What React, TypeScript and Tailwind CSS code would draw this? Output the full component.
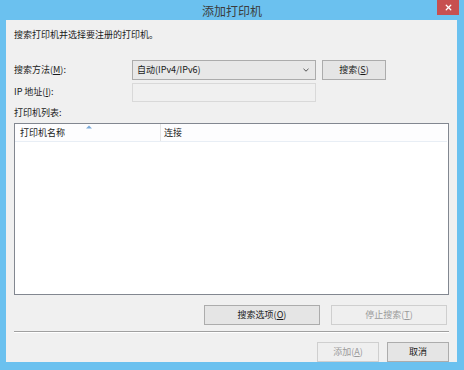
import { X } from 'lucide-react';

const font = "font-['Microsoft_YaHei','Noto_Sans_CJK_SC',sans-serif]";

function Key({ k }: { k: string }) {
  return <span className="underline underline-offset-1">{k}</span>;
}

function Button({ children, disabled, className = '' }: { children: React.ReactNode; disabled?: boolean; className?: string }) {
  return (
    <div
      className={`h-[20px] flex items-center justify-center border text-[9px] ${
        disabled ? 'border-[#cfcfcf] bg-[#efefef] text-[#9a9a9a]' : 'border-[#acacac] bg-[#e5e5e5] text-[#1a1a1a]'
      } ${className}`}
    >
      {children}
    </div>
  );
}

export default function App() {
  return (
    <div className={`relative w-[464px] h-[370px] bg-[#6bc1ef] flex flex-col ${font}`}>
      {/* title bar */}
      <div className="h-[22px] flex items-center justify-center text-[12px] text-[#3c3c3c] pt-[2px]">添加打印机</div>
      <div className="absolute top-0 right-[5px] w-[22px] h-[15px] bg-[#c75050] flex items-center justify-center">
        <X size={9} strokeWidth={3.5} color="#fff" />
      </div>

      {/* client */}
      <div className="ml-[6px] mr-[7px] mb-[8px] flex-1 bg-[#f0f0f0] px-[8px] pt-[8px] flex flex-col text-[9px] text-[#1a1a1a]">
        <div className="h-[14px] leading-[14px]">搜索打印机并选择要注册的打印机。</div>

        <div className="mt-[18px] flex items-center h-[20px]">
          <div className="w-[118px]">
            搜索方法(<Key k="M" />):
          </div>
          <div className="w-[184px] h-[20px] border border-[#acacac] bg-[#e8e8e8] flex items-center justify-between pl-[4px] pr-[6px]">
            <span>自动(IPv4/IPv6)</span>
            <svg width="6" height="4" viewBox="0 0 6 4">
              <path d="M0.5 0.8 L3 3.2 L5.5 0.8" fill="none" stroke="#555" strokeWidth="1" />
            </svg>
          </div>
          <Button className="ml-[6px] w-[64px]">
            搜索(<Key k="S" />)
          </Button>
        </div>

        <div className="mt-[2px] flex items-center h-[20px]">
          <div className="w-[118px]">
            IP 地址(<Key k="I" />):
          </div>
          <div className="w-[184px] h-[19px] border border-[#d9d9d9] bg-[#f0f0f0]" />
        </div>

        <div className="mt-[3px] h-[15px] leading-[15px]">打印机列表:</div>

        <div className="mt-[3px] h-[172px] border border-[#828790] bg-white flex flex-col">
          <div className="h-[18px] flex border-b border-[#e8eef5] bg-[#fdfdfe] mr-[1px]">
            <div className="relative w-[146px] border-r border-[#e5e5e5] flex items-center pl-[5px]">
              打印机名称
              <svg className="absolute left-[71px] top-[1px]" width="6" height="4" viewBox="0 0 6 4">
                <path d="M0 3.5 L3 0.5 L6 3.5 Z" fill="#7aa9d8" />
              </svg>
            </div>
            <div className="flex items-center pl-[3px]">连接</div>
          </div>
        </div>

        <div className="mt-[10px] flex justify-end gap-[11px] pr-[2px]">
          <Button className="w-[116px]">
            搜索选项(<Key k="O" />)
          </Button>
          <Button disabled className="w-[116px]">
            停止搜索(<Key k="T" />)
          </Button>
        </div>

        <div className="mt-[6px] border-t border-[#a0a0a0] border-b border-b-white" />

        <div className="mt-[9px] flex justify-end gap-[8px]">
          <Button disabled className="w-[62px]">
            添加(<Key k="A" />)
          </Button>
          <Button className="w-[62px]">取消</Button>
        </div>
      </div>
    </div>
  );
}
